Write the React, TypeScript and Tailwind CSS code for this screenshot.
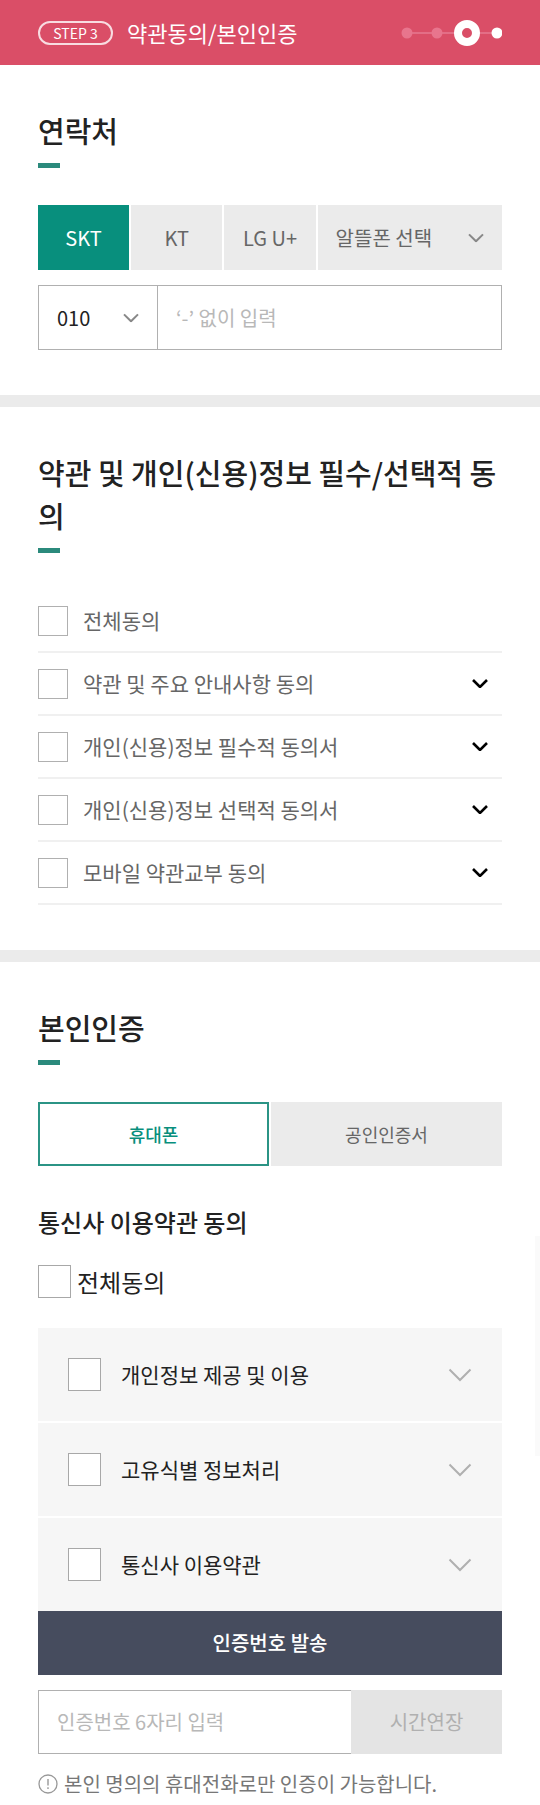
import { useState, type ReactNode } from 'react';

const CARRIERS = ['SKT', 'KT', 'LG U+'];

const AGREEMENTS = [
  { id: 'all', label: '전체동의', expandable: false },
  { id: 'terms', label: '약관 및 주요 안내사항 동의', expandable: true },
  { id: 'required', label: '개인(신용)정보 필수적 동의서', expandable: true },
  { id: 'optional', label: '개인(신용)정보 선택적 동의서', expandable: true },
  { id: 'mobile', label: '모바일 약관교부 동의', expandable: true },
];

const CARRIER_TERMS = [
  { id: 'privacy', label: '개인정보 제공 및 이용' },
  { id: 'identity', label: '고유식별 정보처리' },
  { id: 'usage', label: '통신사 이용약관' },
];

function Chevron({ className }: { className: string }) {
  return (
    <svg viewBox="0 0 24 14" fill="none" className={className} aria-hidden="true">
      <path d="M1.5 1.5 12 12 22.5 1.5" stroke="currentColor" vectorEffect="non-scaling-stroke" />
    </svg>
  );
}

function SectionTitle({ children }: { children: ReactNode }) {
  return (
    <h2 className="text-[29px] leading-[43px] font-medium break-all text-[#222222] after:mt-[11px] after:block after:h-[5px] after:w-[22px] after:bg-[#2b8a7c] after:content-['']">
      {children}
    </h2>
  );
}

function StepDots() {
  return (
    <svg width="102" height="28" viewBox="0 0 102 28" role="img" aria-label="3 / 4">
      <path d="M7 14H97" stroke="#e67a90" strokeWidth="1.6" />
      <circle cx="7" cy="14" r="5.5" fill="#e8758d" />
      <circle cx="37" cy="14" r="5.5" fill="#e8758d" />
      <circle cx="67" cy="14" r="9" fill="#da4e67" stroke="#ffffff" strokeWidth="8" />
      <circle cx="97" cy="14" r="5.5" fill="#ffffff" />
    </svg>
  );
}

export default function App() {
  const [carrier, setCarrier] = useState('SKT');
  const [method, setMethod] = useState('phone');

  return (
    <main className="relative min-h-screen bg-white font-['Noto_Sans_CJK_KR',sans-serif] text-[#222222]">
      <header className="flex h-[65px] items-center bg-[#da4e67] px-[38px] text-white">
        <span className="flex h-6 w-[75px] items-center justify-center rounded-full border-2 border-white/80 text-sm">
          STEP 3
        </span>
        <h1 className="ml-3.5 text-[22px]">약관동의/본인인증</h1>
        <div className="ml-auto">
          <StepDots />
        </div>
      </header>

      <section className="border-b-12 border-[#ebebeb] px-[38px] pt-11 pb-[45px]">
        <SectionTitle>연락처</SectionTitle>

        <div className="mt-[37px] grid h-[65px] grid-cols-5 gap-0.5 text-xl text-[#666666]">
          {CARRIERS.map((name) => (
            <button
              key={name}
              type="button"
              onClick={() => setCarrier(name)}
              className={carrier === name ? 'bg-[#088f7d] text-white' : 'bg-[#ebebeb]'}
            >
              {name}
            </button>
          ))}
          <div className="relative col-span-2">
            <select aria-label="알뜰폰 선택" className="h-full w-full appearance-none bg-[#ebebeb] pl-[18px]">
              <option>알뜰폰 선택</option>
            </select>
            <Chevron className="pointer-events-none absolute top-1/2 right-[18px] w-4 -translate-y-1/2 stroke-2 text-[#888888]" />
          </div>
        </div>

        <div className="mt-[15px] flex h-[65px] border border-[#b0b0b0] text-xl">
          <div className="relative w-[119px] border-r border-[#b0b0b0]">
            <select aria-label="휴대폰 앞자리" className="h-full w-full appearance-none pl-[18px]">
              <option>010</option>
            </select>
            <Chevron className="pointer-events-none absolute top-1/2 right-[18px] w-4 -translate-y-1/2 stroke-2 text-[#888888]" />
          </div>
          <input
            type="tel"
            aria-label="휴대폰 번호"
            placeholder="‘-’ 없이 입력"
            className="min-w-0 flex-1 px-[18px] placeholder:text-[#b8b8b8]"
          />
        </div>
      </section>

      <section className="border-b-12 border-[#ebebeb] px-[38px] pt-11 pb-[45px]">
        <SectionTitle>약관 및 개인(신용)정보 필수/선택적 동의</SectionTitle>

        <ul className="mt-[37px]">
          {AGREEMENTS.map((item) => (
            <li key={item.id} className="flex h-[63px] items-center border-b-2 border-[#f0f0f0] pr-3.5">
              <input
                id={item.id}
                type="checkbox"
                className="size-[30px] appearance-none border border-[#b0b0b0] bg-white checked:bg-[#088f7d]"
              />
              <label htmlFor={item.id} className="ml-[15px] flex-1 text-[21px] text-[#666666]">
                {item.label}
              </label>
              {item.expandable && (
                <button type="button" aria-label={`${item.label} 펼치기`}>
                  <Chevron className="w-4 stroke-[2.6] text-black" />
                </button>
              )}
            </li>
          ))}
        </ul>
      </section>

      <section className="px-[38px] pt-11 pb-1">
        <SectionTitle>본인인증</SectionTitle>

        <div className="mt-[37px] grid h-16 grid-cols-2 gap-0.5 text-[18px]">
          {[
            { id: 'phone', label: '휴대폰' },
            { id: 'cert', label: '공인인증서' },
          ].map((tab) => (
            <button
              key={tab.id}
              type="button"
              onClick={() => setMethod(tab.id)}
              className={
                method === tab.id
                  ? 'border-2 border-[#2b9485] bg-white font-medium text-[#088f7d]'
                  : 'bg-[#ebebeb] text-[#666666]'
              }
            >
              {tab.label}
            </button>
          ))}
        </div>

        <h3 className="mt-10 text-2xl font-medium">통신사 이용약관 동의</h3>
        <div className="mt-[27px] flex items-center">
          <input
            id="carrier-all"
            type="checkbox"
            className="size-[33px] appearance-none border border-[#a8a8a8] bg-white checked:bg-[#088f7d]"
          />
          <label htmlFor="carrier-all" className="ml-1.5 text-2xl">
            전체동의
          </label>
        </div>

        <ul className="mt-[30px] flex flex-col gap-0.5">
          {CARRIER_TERMS.map((item) => (
            <li key={item.id} className="flex h-[93px] items-center bg-[#f6f6f6] px-[30px]">
              <input
                id={item.id}
                type="checkbox"
                className="size-[33px] appearance-none border border-[#a8a8a8] bg-white checked:bg-[#088f7d]"
              />
              <label htmlFor={item.id} className="ml-5 flex-1 text-[21px]">
                {item.label}
              </label>
              <button type="button" aria-label={`${item.label} 펼치기`}>
                <Chevron className="w-6 stroke-2 text-[#b0b0b0]" />
              </button>
            </li>
          ))}
        </ul>

        <button type="button" className="block h-16 w-full bg-[#464c5e] text-xl font-medium text-white">
          인증번호 발송
        </button>

        <div className="mt-[15px] flex h-16 text-xl">
          <input
            type="text"
            inputMode="numeric"
            maxLength={6}
            aria-label="인증번호"
            placeholder="인증번호 6자리 입력"
            className="min-w-0 flex-1 border border-r-0 border-[#b0b0b0] px-[18px] placeholder:text-[#b8b8b8]"
          />
          <button type="button" disabled className="w-[151px] bg-[#e4e4e4] text-[#b0b0b0]">
            시간연장
          </button>
        </div>

        <p className="mt-3.5 flex items-center text-xl leading-8 text-[#777777]">
          <svg width="20" height="20" viewBox="0 0 20 20" fill="none" stroke="#999999" className="mr-1.5" aria-hidden="true">
            <circle cx="10" cy="10" r="9" strokeWidth="1.3" />
            <path d="M10 5v6.5M10 13.3v1.7" strokeWidth="1.4" />
          </svg>
          본인 명의의 휴대전화로만 인증이 가능합니다.
        </p>
      </section>

      {/* scroll indicator */}
      <div className="absolute top-[1236px] right-0 h-[220px] w-[5px] bg-[#fafafa]" aria-hidden="true" />
    </main>
  );
}
